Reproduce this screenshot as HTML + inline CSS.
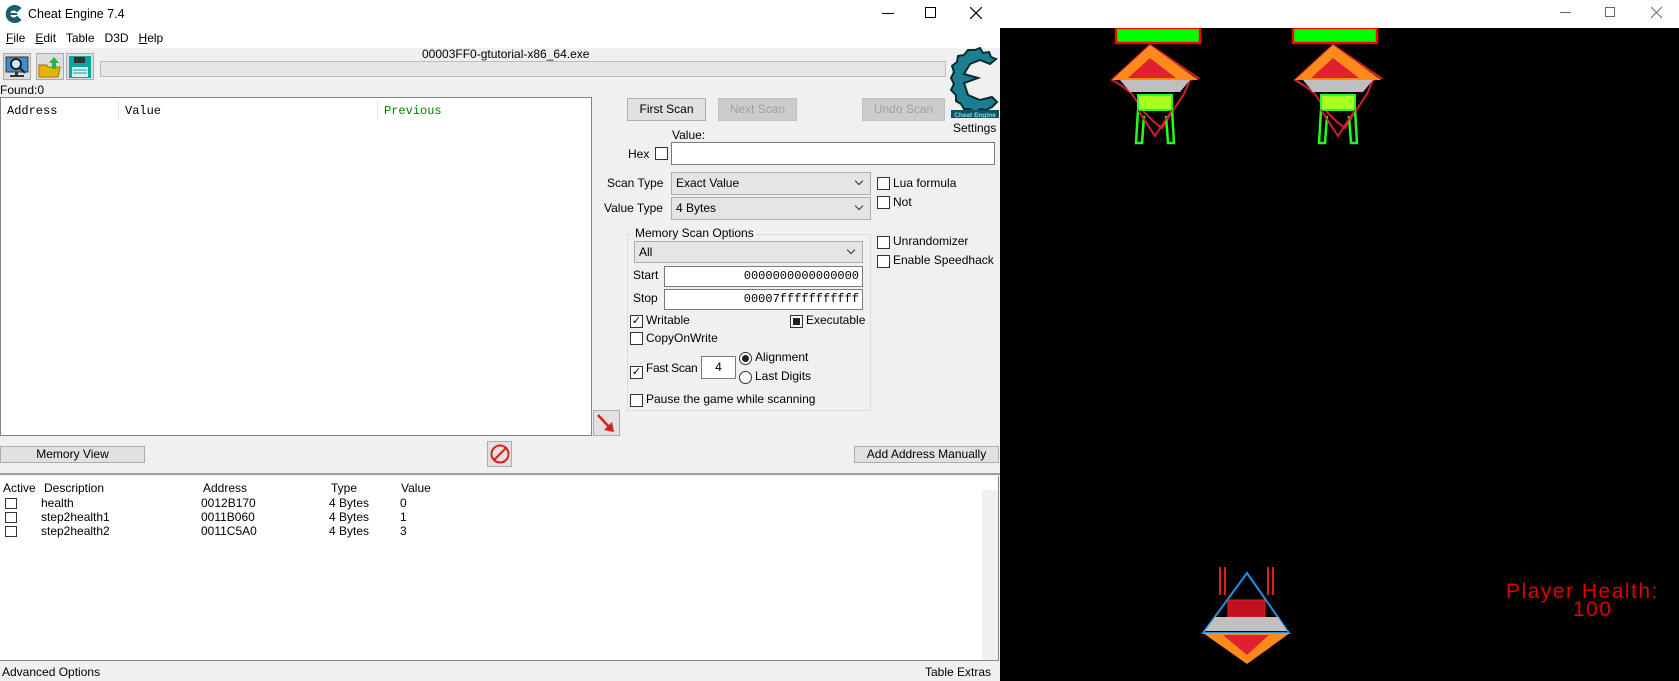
<!DOCTYPE html>
<html><head><meta charset="utf-8"><style>
*{margin:0;padding:0;box-sizing:border-box}
body{width:1679px;height:681px;overflow:hidden;position:relative;background:#f0f0f0;font-family:"Liberation Sans",sans-serif;font-size:12px;color:#000}
.a{position:absolute;white-space:nowrap}
.btn{position:absolute;background:#e1e1e1;border:1px solid #adadad;text-align:center;font-size:12px}
.dis{color:#a0a0a0;background:#cccccc;border-color:#bfbfbf}
.cb{position:absolute;width:13px;height:13px;border:1px solid #333;background:#fff}
.inp{position:absolute;background:#fff;border:1px solid #7a7a7a}
.combo{position:absolute;background:#e5e5e5;border:1px solid #adadad;padding:3px 4px}
.combo:after{content:"";position:absolute;right:8px;top:5px;width:5px;height:5px;border-right:1px solid #333;border-bottom:1px solid #333;transform:rotate(45deg)}
.mono{font-family:"Liberation Mono",monospace}
</style></head><body>
<div class="a" style="left:0;top:0;width:1000px;height:28px;background:#fff"></div>
<svg class="a" style="left:5px;top:4px" width="18" height="20" viewBox="0 0 18 20"><path d="M15 4 A8 8 0 1 0 15 16 L12 13 A4.5 4.5 0 1 1 12 7 Z M3 10 L12 10" fill="#1b5e6e" stroke="#1b5e6e" stroke-width="2"/></svg>
<div class="a" style="left:28px;top:7px;font-size:12.5px">Cheat Engine 7.4</div>
<div class="a" style="left:882px;top:13px;width:12px;height:1px;background:#000"></div>
<div class="a" style="left:925px;top:7px;width:11px;height:11px;border:1px solid #000"></div>
<svg class="a" style="left:970px;top:7px" width="12" height="12"><path d="M0 0 L12 12 M12 0 L0 12" stroke="#000" stroke-width="1.2"/></svg>
<div class="a" style="left:0;top:28px;width:1000px;height:20px;background:#fff"></div>
<div class="a" style="left:6px;top:31px;font-size:12px"><u>F</u>ile&nbsp;&nbsp; <u>E</u>dit&nbsp;&nbsp; Table&nbsp;&nbsp; D3D&nbsp;&nbsp; <u>H</u>elp</div>
<div class="a" style="left:3px;top:53px;width:28px;height:27px;border:1px solid #aaa;background:#ddd"></div>
<svg class="a" style="left:5px;top:56px" width="24" height="22"><rect x="1" y="1" width="22" height="15" fill="#3a8fd0" stroke="#333"/><circle cx="11" cy="8" r="5" fill="#cfe8ff" stroke="#222" stroke-width="2"/><line x1="15" y1="12" x2="20" y2="17" stroke="#222" stroke-width="2"/><rect x="10" y="16" width="3" height="3" fill="#333"/><rect x="5" y="19" width="14" height="2" fill="#333"/></svg>
<div class="a" style="left:36px;top:53px;width:28px;height:27px;border:1px solid #aaa;background:#ddd"></div>
<svg class="a" style="left:38px;top:55px" width="24" height="24"><path d="M1 10 L9 10 L10 12 L22 12 L20 22 L1 22 Z" fill="#e8b300" stroke="#a07800"/><path d="M16 2 L21 8 L18 8 L18 14 L14 14 L14 8 L11 8 Z" fill="#2bb24a"/></svg>
<div class="a" style="left:66px;top:53px;width:28px;height:27px;border:1px solid #aaa;background:#ddd"></div>
<svg class="a" style="left:68px;top:55px" width="24" height="24"><rect x="1" y="1" width="22" height="22" fill="#0ba5a0"/><rect x="6" y="2" width="11" height="6" fill="#333"/><rect x="4" y="12" width="16" height="10" fill="#d8f0f0"/><line x1="5" y1="15" x2="19" y2="15" stroke="#0ba5a0"/><line x1="5" y1="18" x2="19" y2="18" stroke="#0ba5a0"/></svg>
<div class="a" style="left:422px;top:47px;font-size:12px">00003FF0-gtutorial-x86_64.exe</div>
<div class="a" style="left:100px;top:61px;width:846px;height:16px;background:#e6e6e6;border:1px solid #bcbcbc"></div>
<svg class="a" style="left:950px;top:47px" width="50" height="72" viewBox="0 0 50 72"><path d="M25 3 L30 1 L33 6 L39 5 L41 10 L46 12 L40 17 L30 13 L20 17 L14 27 L28 31 L14 36 L18 48 L30 53 L42 50 L47 55 L42 60 L36 63 L30 62 L25 66 L20 62 L14 62 L11 57 L6 54 L6 48 L1 43 L4 37 L1 31 L4 25 L2 19 L7 15 L8 9 L14 8 L18 3 Z" fill="#1b7f8f" stroke="#062b33" stroke-width="2"/><rect x="1" y="63" width="48" height="8" fill="#0e5563"/><text x="25" y="70" font-size="6.5" text-anchor="middle" fill="#7fd8e8" font-family="Liberation Sans" font-weight="bold">Cheat Engine</text></svg>
<div class="a" style="left:953px;top:121px;font-size:12px">Settings</div>
<div class="a" style="left:0;top:83px;font-size:12px">Found:0</div>
<div class="a" style="left:0;top:97px;width:592px;height:339px;background:#fff;border:1px solid #828282"></div>
<div class="a mono" style="left:7px;top:104px;font-size:12px">Address</div>
<div class="a" style="left:118px;top:100px;width:1px;height:20px;background:#e5e5e5"></div>
<div class="a mono" style="left:125px;top:104px;font-size:12px">Value</div>
<div class="a" style="left:377px;top:100px;width:1px;height:20px;background:#e5e5e5"></div>
<div class="a mono" style="left:384px;top:104px;font-size:12px;color:#008000">Previous</div>
<div class="btn" style="left:627px;top:98px;width:79px;height:23px;line-height:21px">First Scan</div>
<div class="btn dis" style="left:718px;top:98px;width:79px;height:23px;line-height:21px">Next Scan</div>
<div class="btn dis" style="left:862px;top:98px;width:83px;height:23px;line-height:21px">Undo Scan</div>
<div class="a" style="left:672px;top:128px">Value:</div>
<div class="a" style="left:628px;top:147px">Hex</div>
<div class="cb" style="left:655px;top:147px"></div>
<div class="inp" style="left:671px;top:142px;width:324px;height:23px"></div>
<div class="a" style="left:607px;top:176px">Scan Type</div>
<div class="combo" style="left:671px;top:172px;width:200px;height:23px">Exact Value</div>
<div class="a" style="left:604px;top:201px">Value Type</div>
<div class="combo" style="left:671px;top:197px;width:200px;height:23px">4 Bytes</div>
<div class="cb" style="left:877px;top:177px"></div><div class="a" style="left:893px;top:176px">Lua formula</div>
<div class="cb" style="left:877px;top:196px"></div><div class="a" style="left:893px;top:195px">Not</div>
<div class="cb" style="left:877px;top:236px"></div><div class="a" style="left:893px;top:234px">Unrandomizer</div>
<div class="cb" style="left:877px;top:255px"></div><div class="a" style="left:893px;top:253px">Enable Speedhack</div>
<div class="a" style="left:627px;top:234px;width:244px;height:177px;border:1px solid #dcdcdc"></div>
<div class="a" style="left:633px;top:226px;background:#f0f0f0;padding:0 2px">Memory Scan Options</div>
<div class="combo" style="left:634px;top:241px;width:229px;height:22px">All</div>
<div class="a" style="left:633px;top:268px">Start</div>
<div class="inp mono" style="left:664px;top:266px;width:199px;height:21px;text-align:right;padding:2px 3px;font-size:12px">0000000000000000</div>
<div class="a" style="left:633px;top:291px">Stop</div>
<div class="inp mono" style="left:664px;top:289px;width:199px;height:21px;text-align:right;padding:2px 3px;font-size:12px">00007fffffffffff</div>
<div class="cb" style="left:630px;top:315px;font-size:11px;line-height:10px;text-align:center">✓</div><div class="a" style="left:646px;top:313px">Writable</div>
<div class="cb" style="left:790px;top:315px"><div style="margin:2px;width:7px;height:7px;background:#222"></div></div><div class="a" style="left:806px;top:313px">Executable</div>
<div class="cb" style="left:630px;top:332px"></div><div class="a" style="left:646px;top:331px">CopyOnWrite</div>
<div class="cb" style="left:630px;top:366px;font-size:11px;line-height:10px;text-align:center">✓</div><div class="a" style="left:646px;top:361px;letter-spacing:-0.3px">Fast Scan</div>
<div class="inp" style="left:701px;top:356px;width:35px;height:23px;text-align:center;line-height:21px">4</div>
<div class="a" style="left:739px;top:352px;width:13px;height:13px;border:1px solid #333;border-radius:50%;background:#fff"><div style="margin:2px;width:7px;height:7px;border-radius:50%;background:#222"></div></div>
<div class="a" style="left:755px;top:350px">Alignment</div>
<div class="a" style="left:739px;top:371px;width:13px;height:13px;border:1px solid #333;border-radius:50%;background:#fff"></div>
<div class="a" style="left:755px;top:369px">Last Digits</div>
<div class="cb" style="left:630px;top:394px"></div><div class="a" style="left:646px;top:392px">Pause the game while scanning</div>
<div class="a" style="left:593px;top:410px;width:27px;height:26px;border:1px solid #adadad;background:#e1e1e1"></div>
<svg class="a" style="left:595px;top:412px" width="22" height="22"><line x1="3" y1="3" x2="16" y2="17" stroke="#d82020" stroke-width="2.5"/><path d="M19 20 L9 18 L17 10 Z" fill="#d82020"/></svg>
<div class="btn" style="left:0;top:446px;width:145px;height:17px;line-height:15px">Memory View</div>
<div class="a" style="left:487px;top:441px;width:25px;height:26px;border:1px solid #adadad;background:#e1e1e1"></div>
<svg class="a" style="left:489px;top:443px" width="22" height="22"><circle cx="11" cy="11" r="8.5" fill="none" stroke="#d82020" stroke-width="2"/><line x1="5" y1="17" x2="17" y2="5" stroke="#d82020" stroke-width="2"/></svg>
<div class="btn" style="left:854px;top:446px;width:145px;height:17px;line-height:15px">Add Address Manually</div>
<div class="a" style="left:0;top:473px;width:1000px;height:2px;background:#a0a0a0"></div>
<div class="a" style="left:0;top:476px;width:999px;height:185px;background:#fff;border-right:1px solid #888;border-bottom:1px solid #888"></div>
<div class="a" style="left:982px;top:490px;width:16px;height:170px;background:#f0f0f0"></div>
<div class="a" style="left:3px;top:481px">Active</div>
<div class="a" style="left:44px;top:481px">Description</div>
<div class="a" style="left:203px;top:481px">Address</div>
<div class="a" style="left:331px;top:481px">Type</div>
<div class="a" style="left:401px;top:481px">Value</div>
<div class="cb" style="left:5px;top:498px;width:12px;height:11px"></div>
<div class="cb" style="left:5px;top:512px;width:12px;height:11px"></div>
<div class="cb" style="left:5px;top:526px;width:12px;height:11px"></div>
<div class="a" style="left:41px;top:496px;line-height:14px">health<br>step2health1<br>step2health2</div>
<div class="a" style="left:201px;top:496px;line-height:14px">0012B170<br>0011B060<br>0011C5A0</div>
<div class="a" style="left:329px;top:496px;line-height:14px">4 Bytes<br>4 Bytes<br>4 Bytes</div>
<div class="a" style="left:400px;top:496px;line-height:14px">0<br>1<br>3</div>
<div class="a" style="left:2px;top:665px">Advanced Options</div>
<div class="a" style="left:925px;top:665px">Table Extras</div>
<div class="a" style="left:1000px;top:0;width:679px;height:28px;background:#fff"></div>
<div class="a" style="left:1560px;top:12px;width:11px;height:1px;background:#666"></div>
<div class="a" style="left:1605px;top:7px;width:10px;height:10px;border:1px solid #666"></div>
<svg class="a" style="left:1651px;top:7px" width="11" height="11"><path d="M0 0 L11 11 M11 0 L0 11" stroke="#666" stroke-width="1"/></svg>
<div class="a" style="left:1000px;top:28px;width:679px;height:653px;background:#000"></div>
<svg class="a" style="left:1000px;top:28px" width="679" height="653">
<defs><g id="en">
<path d="M40 17 L88 50 L80 52 L74 66 L62 84 L52 100 L44 94 L34 84 L22 66 L12 58 L2 52 Z" fill="none" stroke="#d02030" stroke-width="2"/>
<path d="M40 17 L88 52 L2 52 Z" fill="#ff8a1c"/>
<path d="M40 30 L66 50 L18 50 Z" fill="#e02030"/>
<path d="M10 52 L80 52 L70 64 L20 64 Z" fill="#bfbfbf"/>
<rect x="28" y="67" width="34" height="15" fill="#a8ff20" stroke="#20ff20" stroke-width="2"/>
<path d="M28 82 L26 115 L32 115 L34 88 M62 82 L64 115 L58 115 L56 88" fill="none" stroke="#20ff20" stroke-width="2.5"/>
<path d="M28 82 L45 108 L62 82" fill="none" stroke="#d02030" stroke-width="2"/>
</g></defs>
<rect x="116" y="0" width="84" height="15" fill="#00ff00" stroke="#ff0000" stroke-width="2.5"/>
<rect x="293" y="0" width="84" height="15" fill="#00ff00" stroke="#ff0000" stroke-width="2.5"/>
<use href="#en" x="110" y="0"/>
<use href="#en" x="293" y="0"/>
<g transform="translate(203,537)">
<path d="M17 2 L17 30 M22 2 L22 30 M65 2 L65 30 M70 2 L70 30" stroke="#e02020" stroke-width="2"/>
<path d="M44 8 L86 68 L0 68 Z" fill="none" stroke="#2090e0" stroke-width="2"/>
<rect x="25" y="35" width="37" height="17" fill="#c01020" stroke="#e02020"/>
<path d="M12 52 L75 52 L84 66 L2 66 Z" fill="#c0c0c0"/>
<path d="M0 68 L87 68 L44 99 Z" fill="#ff8a1c"/>
<path d="M20 70 L66 70 L44 90 Z" fill="#e02030"/>
</g>
</svg>
<div class="a" style="left:1506px;top:580px;font-size:21px;color:#e00000;letter-spacing:1.5px">Player Health:</div>
<div class="a" style="left:1573px;top:598px;font-size:21px;color:#e00000;letter-spacing:1.5px">100</div>
</body></html>
